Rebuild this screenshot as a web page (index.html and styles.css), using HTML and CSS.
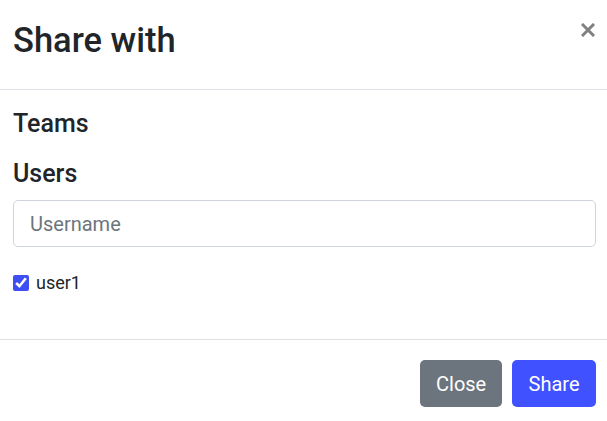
FILE: index.html
```html
<!DOCTYPE html>
<html>
<head>
<meta charset="utf-8">
<link rel="stylesheet" href="styles.css">
</head>
<body>
<div class="modal">
  <div class="modal-header">
    <h1 class="modal-title">Share with</h1>
    <button class="close" aria-label="Close">
      <svg width="14" height="14" viewBox="0 0 14 14"><path d="M2 2L12 12M12 2L2 12" stroke="currentColor" stroke-width="3" stroke-linecap="square"/></svg>
    </button>
  </div>
  <div class="modal-body">
    <h2 class="section-title teams">Teams</h2>
    <h2 class="section-title users">Users</h2>
    <input class="form-control" type="text" placeholder="Username">
    <label class="check">
      <input type="checkbox" checked>
      <span>user1</span>
    </label>
  </div>
  <div class="modal-footer">
    <button class="btn btn-secondary">Close</button>
    <button class="btn btn-primary">Share</button>
  </div>
</div>
</body>
</html>
```
FILE: styles.css
```css
* { box-sizing: border-box; }
html, body { margin: 0; padding: 0; background: #fff; }
body {
  font-family: Roboto, "Liberation Sans", sans-serif;
  color: #212529;
  width: 607px;
  height: 421px;
  overflow: hidden;
}
.modal { width: 607px; }
.modal-header {
  display: flex;
  justify-content: space-between;
  align-items: flex-start;
  height: 90px;
  padding: 20px 12px 0 13px;
  border-bottom: 1px solid #dee2e6;
}
.modal-title {
  margin: 0;
  font-size: 34.5px;
  font-weight: 500;
  line-height: 41px;
}
.close {
  margin-top: 3px;
  padding: 0;
  border: 0;
  background: none;
  color: #808080;
  width: 14px;
  height: 14px;
  display: block;
}
.close svg { display: block; }
.modal-body {
  padding: 19px 11px 0 13px;
  height: 250px;
  border-bottom: 1px solid #dee2e6;
}
.section-title {
  margin: 0;
  font-size: 25px;
  font-weight: 500;
  line-height: 29px;
}
.teams { margin-bottom: 21px; }
.users { margin-bottom: 12px; }
.form-control {
  display: block;
  width: 583px;
  height: 47px;
  padding: 0 16px;
  border: 1px solid #ced4da;
  border-radius: 5px;
  font-family: inherit;
  font-size: 20px;
  color: #212529;
  outline: none;
}
.form-control::placeholder { color: #6c757d; }
.check {
  display: flex;
  align-items: center;
  gap: 7px;
  margin-top: 27px;
  font-size: 18px;
  line-height: 18px;
}
.check input {
  margin: 0;
  width: 16px;
  height: 16px;
  accent-color: #3d4ef5;
}
.modal-footer {
  display: flex;
  justify-content: flex-end;
  gap: 10px;
  padding: 20px 11px 0 13px;
}
.btn {
  height: 47px;
  border: 0;
  border-radius: 5px;
  font-family: inherit;
  font-size: 20px;
  color: #fff;
  padding: 0 16px;
}
.btn-secondary { background: #6c757d; width: 82px; }
.btn-primary { background: #4051ff; width: 84px; }
```
